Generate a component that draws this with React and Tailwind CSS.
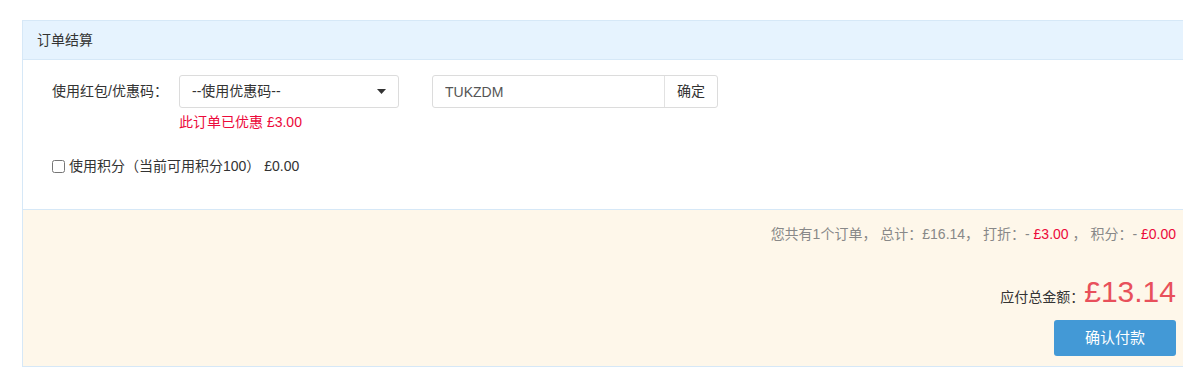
import React, { useState } from "react"

const font = { fontFamily: '"Liberation Sans", Arial, "Noto Sans CJK SC", sans-serif' }

const App = () => {
  const [coupon, setCoupon] = useState("TUKZDM")
  const [usePoints, setUsePoints] = useState(false)

  return (
    <div className="w-[1183px] h-[369px] overflow-hidden bg-white pt-[20px] pl-[22px] text-[14px] text-[#333]" style={font}>
      <div className="w-[1166px] border border-[#d6e8f7]">
        {/* Header */}
        <div className="h-[39px] flex items-center pl-[14px] bg-[#e6f3fe] border-b border-[#d6e8f7]">
          订单结算
        </div>

        {/* Body */}
        <div className="h-[149px] pt-[15px] pl-[29px] bg-white">
          <div className="flex items-start">
            <div className="w-[127px] h-[33px] flex items-center">使用红包/优惠码：</div>
            <div className="flex flex-col">
              <div className="w-[220px] h-[33px] flex items-center justify-between pl-[12px] pr-[12px] border border-[#dcdcdc] rounded-[3px]">
                <span>--使用优惠码--</span>
                <svg width="9" height="5" viewBox="0 0 9 5">
                  <path d="M0 0h9L4.5 5z" fill="#333" />
                </svg>
              </div>
              <div className="mt-[4px] leading-[20px] text-[#ec0a3b]">此订单已优惠 £3.00</div>
            </div>
            <div className="ml-[33px] flex h-[33px] border border-[#dcdcdc] rounded-[3px]">
              <input
                value={coupon}
                onChange={(e) => setCoupon(e.target.value)}
                className="w-[231px] h-full pl-[12px] outline-none text-[#555] bg-transparent"
                style={font}
              />
              <button className="w-[53px] h-full border-l border-[#e2e2e2] text-[#333]" style={font}>
                确定
              </button>
            </div>
          </div>

          <label className="mt-[24px] flex items-center gap-[4px] leading-[20px]">
            <input
              type="checkbox"
              checked={usePoints}
              onChange={(e) => setUsePoints(e.target.checked)}
              className="w-[13px] h-[13px] m-0"
            />
            <span>使用积分（当前可用积分100） £0.00</span>
          </label>
        </div>

        {/* Footer */}
        <div className="h-[157px] bg-[#fef7ea] border-t border-[#d6e8f7] pr-[11px] flex flex-col items-end">
          <div className="mt-[14px] leading-[20px] text-[#888]">
            您共有1个订单， 总计：£16.14， 打折：- <span className="text-[#ec0a3b]">£3.00</span> ， 积分：- <span className="text-[#ec0a3b]">£0.00</span>
          </div>
          <div className="mt-[30px] flex items-baseline">
            <span>应付总金额：</span>
            <span className="text-[30px] leading-[36px] text-[#e8505b]">£13.14</span>
          </div>
          <button className="mt-[10px] w-[122px] h-[36px] rounded-[3px] bg-[#4399d6] text-white text-[15px]" style={font}>
            确认付款
          </button>
        </div>
      </div>
    </div>
  )
}

export default App
